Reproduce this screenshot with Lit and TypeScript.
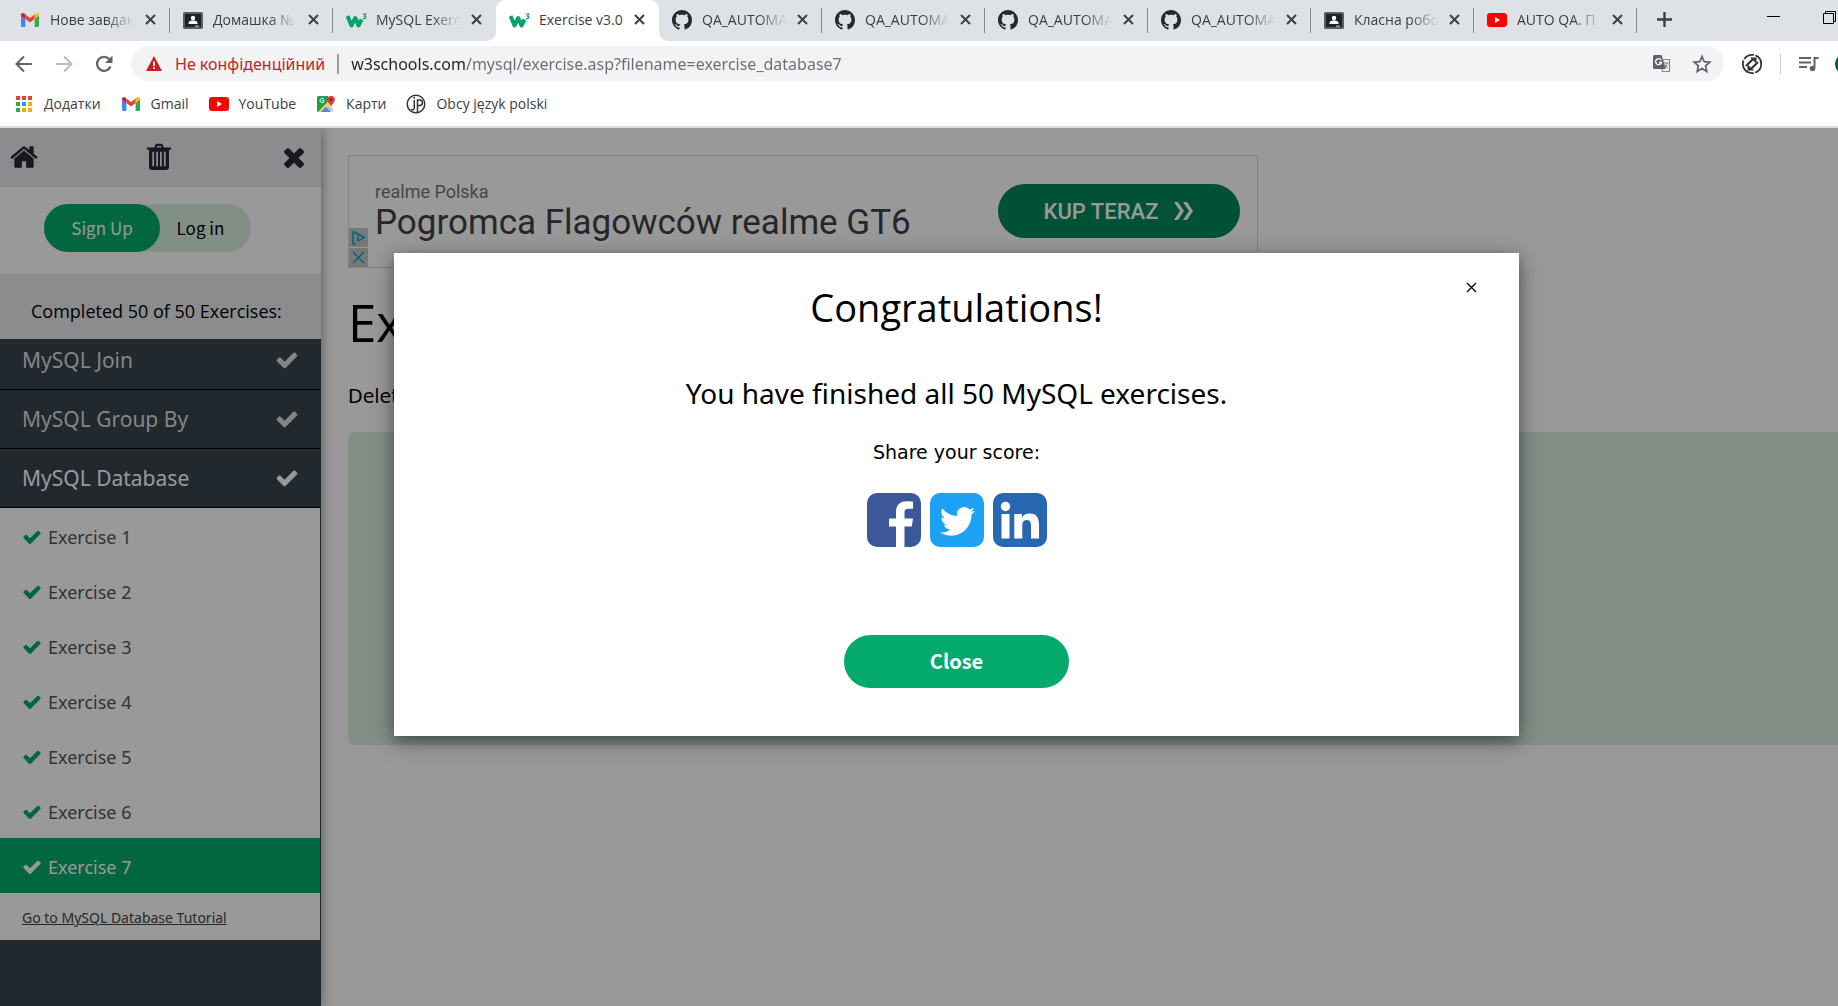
import { LitElement, html, css, svg, TemplateResult } from "lit";
import { customElement } from "lit/decorators.js";
import { classMap } from "lit/directives/class-map.js";

const UI_FONT = css`"Open Sans", "Noto Sans", sans-serif`;
const PAGE_FONT = css`"Noto Sans", "Open Sans", sans-serif`;

const base = css`
  * {
    box-sizing: border-box;
  }
  svg {
    display: block;
    flex: none;
  }
  button,
  input {
    margin: 0;
    padding: 0;
    border: 0;
    background: none;
    font: inherit;
    color: inherit;
  }
  a {
    color: inherit;
    text-decoration: none;
  }
`;

/* ---------- icons ---------- */

const CHECK =
  "M1671 566q0 40-28 68l-724 724-136 136q-28 28-68 28t-68-28l-136-136-362-362q-28-28-28-68t28-68l136-136q28-28 68-28t68 28l294 295 656-657q28-28 68-28t68 28l136 136q28 28 28 68z";
const TIMES =
  "M1490 1322q0 40-28 68l-136 136q-28 28-68 28t-68-28l-294-294-294 294q-28 28-68 28t-68-28l-136-136q-28-28-28-68t28-68l294-294-294-294q-28-28-28-68t28-68l136-136q28-28 68-28t68 28l294 294 294-294q28-28 68-28t68 28l136 136q28 28 28 68t-28 68l-294 294 294 294q28 28 28 68z";
const HOME =
  "M1472 992v480q0 26-19 45t-45 19h-384v-384h-256v384h-384q-26 0-45-19t-19-45v-480q0-1 .5-3t.5-3l575-474 575 474q1 2 1 6zm223-69l-62 74q-8 9-21 11h-3q-13 0-21-7l-692-577-692 577q-12 8-24 7-13-2-21-11l-62-74q-8-10-7-23.5t11-21.5l719-599q32-26 76-26t76 26l244 204v-195q0-14 9-23t23-9h192q14 0 23 9t9 23v408l219 182q10 8 11 21.5t-7 23.5z";

const solid = (d: string, size: number) => html`
  <svg width=${size} height=${size} viewBox="0 0 1792 1792" fill="currentColor" aria-hidden="true">
    <path d=${d} />
  </svg>
`;

const trash = html`
  <svg width="30" height="30" viewBox="0 0 30 30" fill="currentColor" aria-hidden="true">
    <path d="M10 6.500L11.200 3q.5-1.300 2-1.300h3.800q1.500 0 2 1.300l1.200 3.500h-2.500l-.8-2.500h-3.600l-.8 2.500z" />
    <rect x="3" y="5.500" width="24" height="2.300" rx=".6" />
    <path
      fill-rule="evenodd"
      d="M5 7h20v18q0 3-3 3H8q-3 0-3-3zM8.300 9.700v14.600h1.800V9.700zM12.200 9.700v14.600h1.800V9.700zM16 9.700v14.600h1.800V9.700zM19.900 9.700v14.600h1.800V9.700z"
    />
  </svg>
`;

const gmail = html`
  <svg width="20" height="20" viewBox="0 0 20 20" aria-hidden="true">
    <path d="M1 5.500v10.300q0 1.200 1.200 1.200H5.400V8.800z" fill="#4285f4" />
    <path d="M19 5.500v10.300q0 1.200-1.200 1.200H14.600V8.800z" fill="#34a853" />
    <path d="M14.600 4.500v4.500L19 5.800V5c0-1.900-2-2.600-3.300-1.500z" fill="#fbbc04" />
    <path d="M5.400 9V4.500L10 8l4.600-3.500V9L10 12.500z" fill="#ea4335" />
    <path d="M1 5v.8L5.400 9V4.500L4.300 3.500C3 2.400 1 3.100 1 5z" fill="#c5221f" />
  </svg>
`;

const classroom = html`
  <svg width="20" height="20" viewBox="0 0 20 20" aria-hidden="true">
    <rect x="0" y="2" width="20" height="17" rx="1.500" fill="#5c5f62" />
    <rect x="2" y="4" width="16" height="13" fill="#202124" />
    <circle cx="10" cy="8" r="2.200" fill="#fff" />
    <path d="M5.500 14v-1c0-1.800 2.800-2.400 4.500-2.400s4.500.6 4.500 2.400v1z" fill="#fff" />
    <rect x="12" y="15.500" width="4" height="1.500" fill="#9aa0a6" />
  </svg>
`;

const w3 = html`
  <svg width="22" height="20" viewBox="0 0 22 20" aria-hidden="true">
    <path
      d="M1.500 6L5.500 15.500L9.300 8L12.500 15.500L15.500 9.500"
      fill="none"
      stroke="#04a36a"
      stroke-width="4"
      stroke-linejoin="round"
    />
    <path
      d="M16.800 4h3L18.300 6.200q1.800.2 1.500 1.600q-.4 1.300-2.900.7"
      fill="none"
      stroke="#04a36a"
      stroke-width="1.200"
    />
  </svg>
`;

const github = html`
  <svg width="20" height="20" viewBox="0 0 16 16" fill="#24292e" aria-hidden="true">
    <path
      d="M8 0C3.580 0 0 3.580 0 8c0 3.540 2.290 6.530 5.470 7.590.4.070.55-.17.55-.38 0-.19-.01-.82-.01-1.490-2.010.37-2.530-.49-2.690-.94-.09-.23-.48-.94-.82-1.130-.28-.15-.68-.52-.01-.53.63-.01 1.080.58 1.230.82.72 1.210 1.870.87 2.330.66.070-.52.28-.87.51-1.070-1.780-.2-3.640-.89-3.640-3.950 0-.87.31-1.590.82-2.150-.08-.2-.36-1.020.080-2.120 0 0 .67-.21 2.200.82.64-.18 1.320-.27 2-.27.68 0 1.360.09 2 .27 1.530-1.040 2.200-.82 2.200-.82.44 1.100.16 1.920.08 2.120.51.56.82 1.270.82 2.150 0 3.070-1.870 3.750-3.650 3.950.29.25.54.73.54 1.480 0 1.070-.01 1.930-.01 2.200 0 .21.15.46.55.38A8.013 8.013 0 0016 8c0-4.420-3.580-8-8-8z"
    />
  </svg>
`;

const youtube = html`
  <svg width="20" height="20" viewBox="0 0 20 20" aria-hidden="true">
    <rect x="0" y="3" width="20" height="14" rx="3" fill="#f00" />
    <path d="M8 7l5 3-5 3z" fill="#fff" />
  </svg>
`;

const dots = ["#ea4335", "#ea4335", "#ea4335", "#34a853", "#4285f4", "#f9ab00", "#34a853", "#f9ab00", "#f9ab00"];
const apps = html`
  <svg width="20" height="20" viewBox="0 0 20 20" aria-hidden="true">
    ${dots.map((c, i) => svg`<rect x=${2 + (i % 3) * 6} y=${2 + Math.floor(i / 3) * 6} width="4" height="4" fill=${c} />`)}
  </svg>
`;

const maps = html`
  <svg width="20" height="20" viewBox="0 0 20 20" aria-hidden="true">
    <rect x="1" y="2" width="16" height="16" rx="1.500" fill="#e8eaed" />
    <path d="M1 3.500Q1 2 2.500 2H12L12 8 3 18H2.500Q1 18 1 16.500z" fill="#1e9e5a" />
    <path d="M2 18L12 7.500L14 9.500L5.500 18z" fill="#fdd23c" />
    <path d="M5 18L9.700 12.500L15 18z" fill="#4285f4" />
    <path d="M10 13.500l2.500-2.500 4.500 5v1.500z" fill="#bdc1c6" />
    <path d="M7.800 5.300a2.100 2.100 0 1 0 .4 1.500H6.200" fill="none" stroke="#fff" stroke-width="1" />
    <path d="M15 13c-.4-3-3.600-4-3.600-7.200a3.700 3.700 0 0 1 7.400 0c0 3.200-3.400 4.200-3.800 7.200z" fill="#e53935" />
    <circle cx="15" cy="5.500" r="1.300" fill="#8b1a14" />
  </svg>
`;

const polish = html`
  <svg width="20" height="20" viewBox="0 0 20 20" fill="none" stroke="#333" aria-hidden="true">
    <circle cx="10" cy="10" r="8.800" stroke-width="1.500" />
    <path d="M8.300 6v8q0 2.200-3.300 1.800M11.500 18.500V6h2.200q2.800 0 2.800 2.700t-2.800 2.700h-2M8.300 3v1.700" stroke-width="1.500" />
  </svg>
`;

const closeGlyph = html`
  <svg width="11" height="11" viewBox="0 0 11 11" fill="none" stroke="#3c4043" stroke-width="2" aria-hidden="true">
    <path d="M1 1l9 9M10 1l-9 9" />
  </svg>
`;

/* ---------- browser tab strip ---------- */

interface Tab {
  icon: TemplateResult;
  title: string;
  active?: boolean;
}

@customElement("browser-tabs")
export class BrowserTabs extends LitElement {
  static styles = [
    base,
    css`
      :host {
        display: flex;
        justify-content: space-between;
        height: 41px;
        padding-left: 7px;
        background: #dee1e6;
        color: #3c4043;
        font: 14px/20px ${UI_FONT};
        overflow: hidden;
      }
      .tabs {
        display: flex;
      }
      .tab {
        position: relative;
        display: flex;
        align-items: center;
        width: 163px;
        padding: 0 14px 2px 13px;
      }
      .tab::after {
        content: "";
        position: absolute;
        right: 0;
        top: 8px;
        width: 1px;
        height: 25px;
        background: #85888c;
      }
      .tab.bare::after {
        display: none;
      }
      .active {
        background: #fff;
        border-radius: 9px 9px 0 0;
      }
      .tab.active::before,
      .tab.active::after {
        content: "";
        position: absolute;
        top: auto;
        bottom: 0;
        width: 9px;
        height: 9px;
        background: none;
        clip-path: inset(0);
      }
      .tab.active::before {
        left: -9px;
        border-bottom-right-radius: 9px;
        box-shadow: 4px 4px 0 4px #fff;
      }
      .tab.active::after {
        right: -9px;
        border-bottom-left-radius: 9px;
        box-shadow: -4px 4px 0 4px #fff;
      }
      .icon {
        width: 30px;
        flex: none;
      }
      .title {
        flex: 1;
        overflow: hidden;
        white-space: nowrap;
        mask-image: linear-gradient(to right, #000 65%, transparent 98%);
      }
      .active .title {
        mask-image: none;
      }
      .close {
        width: 20px;
        height: 20px;
        margin-left: 4px;
        margin-right: -4px;
        display: grid;
        place-items: center;
      }
      .new {
        width: 55px;
        display: grid;
        place-items: center;
        padding-bottom: 2px;
      }
      .window {
        display: flex;
        align-items: flex-start;
        gap: 43px;
        padding-top: 11px;
      }
    `,
  ];

  private tabs: Tab[] = [
    { icon: gmail, title: "Нове завдан" },
    { icon: classroom, title: "Домашка №" },
    { icon: w3, title: "MySQL Exerc" },
    { icon: w3, title: "Exercise v3.0", active: true },
    { icon: github, title: "QA_AUTOMA" },
    { icon: github, title: "QA_AUTOMA" },
    { icon: github, title: "QA_AUTOMA" },
    { icon: github, title: "QA_AUTOMA" },
    { icon: classroom, title: "Класна робо" },
    { icon: youtube, title: "AUTO QA. П" },
  ];

  render() {
    return html`
      <div class="tabs">
        ${this.tabs.map(
          (t, i) => html`
            <div class=${classMap({ tab: true, active: !!t.active, bare: !!this.tabs[i + 1]?.active })}>
              <span class="icon">${t.icon}</span>
              <span class="title">${t.title}</span>
              <button class="close" aria-label="Close tab">${closeGlyph}</button>
            </div>
          `
        )}
        <button class="new" aria-label="New tab">
          <svg width="15" height="15" viewBox="0 0 15 15" stroke="#3c4043" stroke-width="2.400">
            <path d="M7.500 0v15M0 7.500h15" />
          </svg>
        </button>
      </div>
      <div class="window">
        <button aria-label="Minimize">
          <svg width="13" height="12" viewBox="0 0 13 12"><path d="M0 5.500h13" stroke="#000" /></svg>
        </button>
        <button aria-label="Restore">
          <svg width="15" height="14" viewBox="0 0 15 14" fill="none" stroke="#000">
            <path d="M.5 2.500h10v10H.5zM2.500 2V.5h10v10H11" />
          </svg>
        </button>
      </div>
    `;
  }
}

/* ---------- toolbar and bookmarks ---------- */

@customElement("browser-toolbar")
export class BrowserToolbar extends LitElement {
  static styles = [
    base,
    css`
      :host {
        display: block;
        background: #fff;
        border-bottom: 2px solid #dadce0;
        font: 14px/20px ${UI_FONT};
        color: #3c4043;
        overflow: hidden;
      }
      .bar {
        display: flex;
        align-items: center;
        height: 45px;
        padding: 5px 0 5px 14px;
      }
      .nav {
        display: flex;
        gap: 20px;
        width: 117px;
        flex: none;
      }
      .address {
        flex: 1;
        display: flex;
        align-items: center;
        height: 35px;
        padding: 0 12px 0 15px;
        border-radius: 18px;
        background: #f1f3f4;
        font: 16px/24px ${PAGE_FONT};
      }
      .insecure {
        margin-left: 13px;
        color: #c5221f;
        white-space: nowrap;
      }
      .rule {
        width: 2px;
        height: 20px;
        margin: 0 12px;
        background: #9aa0a6;
        flex: none;
      }
      .url {
        flex: 1;
        min-width: 0;
        height: 26px;
        color: #5f6368;
        background: linear-gradient(to right, #202124 115px, #6a6d71 115px);
        -webkit-background-clip: text;
        background-clip: text;
        -webkit-text-fill-color: transparent;
      }
      .tools {
        display: flex;
        gap: 20px;
      }
      .extras {
        display: flex;
        align-items: center;
        margin-left: 17px;
      }
      .split {
        width: 1px;
        height: 20px;
        margin: 0 18px 0 17px;
        background: #c6c8cb;
      }
      .profile {
        width: 30px;
        height: 24px;
        margin: 0 -27px 0 16px;
        border-radius: 50%;
        background: #00574b;
      }
      .bookmarks {
        display: flex;
        height: 40px;
        padding: 0 14px 5px;
        align-items: center;
        gap: 20px;
      }
      .bookmark {
        display: flex;
        align-items: center;
        gap: 10px;
      }
    `,
  ];

  private bookmarks: [TemplateResult, string][] = [
    [apps, "Додатки"],
    [gmail, "Gmail"],
    [youtube, "YouTube"],
    [maps, "Карти"],
    [polish, "Obcy język polski"],
  ];

  render() {
    return html`
      <div class="bar">
        <div class="nav">
          <button aria-label="Back">
            <svg width="20" height="20" viewBox="0 0 20 20" fill="none" stroke="#5f6368" stroke-width="2">
              <path d="M18 10H3M10 2.500L2.500 10l7.500 7.500" />
            </svg>
          </button>
          <button aria-label="Forward">
            <svg width="20" height="20" viewBox="0 0 20 20" fill="none" stroke="#babcbe" stroke-width="2">
              <path d="M2 10h15M10 2.500l7.500 7.500-7.500 7.500" />
            </svg>
          </button>
          <button aria-label="Reload">
            <svg width="20" height="20" viewBox="0 0 20 20" fill="none" stroke="#5f6368" stroke-width="2.200">
              <path d="M16.500 12.500a7 7 0 1 1-1.200-7.300" />
              <path d="M18.500 1.500v7.500h-7.500z" fill="#5f6368" stroke="none" />
            </svg>
          </button>
        </div>
        <div class="address">
          <svg width="16" height="15" viewBox="0 0 16 15" aria-hidden="true">
            <path d="M8 0l8 15H0z" fill="#c5221f" />
            <path d="M8 5.500v4.500M8 11.300v1.800" stroke="#fff" stroke-width="1.700" />
          </svg>
          <span class="insecure">Не конфіденційний</span>
          <span class="rule"></span>
          <input
            class="url"
            type="text"
            aria-label="Address"
            .value=${"w3schools.com/mysql/exercise.asp?filename=exercise_database7"}
          />
          <div class="tools">
            <button aria-label="Translate">
              <svg width="20" height="20" viewBox="0 0 20 20" fill="none">
                <path d="M8.500 5.500h9v12h-7z" stroke="#85888c" stroke-width="1.200" />
                <path d="M2.500 1h7L14 15H2.500Q1 15 1 13.500v-11Q1 1 2.500 1z" fill="#5f6368" />
                <path d="M9.300 6.300A3 3 0 1 0 9.500 8.500H7" stroke="#fff" stroke-width="1.300" />
                <path d="M11.500 9h5M14 8v1M15.500 9q-1 3-3 4.500M13 11l3 3" stroke="#85888c" />
              </svg>
            </button>
            <button aria-label="Bookmark">
              <svg width="20" height="20" viewBox="0 0 20 20" fill="none" stroke="#5f6368" stroke-width="1.700">
                <path d="M10 2.500l2.200 5.200 5.600.5-4.200 3.700 1.200 5.500L10 14.500l-4.800 2.900 1.200-5.500L2.200 8.200l5.600-.5z" />
              </svg>
            </button>
          </div>
        </div>
        <div class="extras">
          <button aria-label="Extension">
            <svg width="22" height="22" viewBox="0 0 22 22" fill="none" stroke="#333">
              <circle cx="11" cy="11" r="9.200" stroke-width="1.800" stroke-dasharray="11 1.500 20 1.500" />
              <path d="M5 13L12 6M10 16L17 9" stroke-width="2.200" />
              <path d="M9 4.500h6.500v6zM13 17.500H6.500v-6z" fill="#333" stroke="none" />
            </svg>
          </button>
          <span class="split"></span>
          <button aria-label="Media controls">
            <svg width="20" height="20" viewBox="0 0 20 20" fill="none" stroke="#5f6368" stroke-width="2">
              <path d="M0 4h12M0 8.500h12M0 13h8M15.500 14V4h4" />
              <circle cx="13.500" cy="14.500" r="2.800" fill="#5f6368" stroke="none" />
            </svg>
          </button>
          <button class="profile" aria-label="Profile"></button>
        </div>
      </div>
      <nav class="bookmarks">
        ${this.bookmarks.map(([icon, label]) => html`<a class="bookmark" href="#">${icon}<span>${label}</span></a>`)}
      </nav>
    `;
  }
}

/* ---------- exercise sidebar ---------- */

@customElement("exercise-sidebar")
export class ExerciseSidebar extends LitElement {
  static styles = [
    base,
    css`
      :host {
        position: relative;
        display: flex;
        flex-direction: column;
        flex: none;
        width: 321px;
        background: #38444d;
        box-shadow: 0 0 12px rgba(0, 0, 0, 0.45);
        font: 18px/24px ${PAGE_FONT};
        color: #000;
      }
      .top {
        display: flex;
        align-items: center;
        justify-content: space-between;
        height: 59px;
        padding: 0 12px 2px 9px;
        background: #e7e9eb;
        color: #282a35;
      }
      .account {
        height: 87px;
        padding: 17px 0 0 44px;
        background: #fff;
      }
      .pill {
        display: inline-flex;
        height: 48px;
        border-radius: 24px;
        background: #d9eee1;
        font: 17px/24px "Noto Sans CJK SC", "Open Sans", sans-serif;
      }
      .signup {
        width: 116px;
        border-radius: 24px;
        background: #04aa6d;
        color: #fff;
      }
      .login {
        width: 91px;
        padding-right: 10px;
      }
      .progress {
        height: 65px;
        padding: 25px 0 0 31px;
        background: #e7e9eb;
        white-space: nowrap;
        font-family: ${UI_FONT};
      }
      .menu {
        flex: 1;
        min-height: 0;
        overflow: hidden;
        padding-right: 1px;
      }
      .scrolled {
        margin-top: -8px;
      }
      .topic {
        display: flex;
        align-items: center;
        justify-content: space-between;
        width: 100%;
        height: 59px;
        padding: 0 21px 0 22px;
        border-bottom: 1px solid #000;
        color: #ddd;
        font-size: 21px;
      }
      .topic.open {
        color: #fff;
      }
      .exercise {
        display: flex;
        align-items: center;
        gap: 6px;
        height: 55px;
        padding: 2px 22px 0;
        background: #fff;
        color: #555;
      }
      .exercise svg {
        color: #04aa6d;
      }
      .exercise.current,
      .exercise.current svg {
        background: #04aa6d;
        color: #fff;
      }
      .more {
        height: 47px;
        padding: 13px 22px 0;
        background: #fff;
        color: #444;
        font-size: 14px;
      }
      .more a {
        text-decoration: underline;
      }
    `,
  ];

  private topics = ["MySQL Join", "MySQL Group By", "MySQL Database"];

  render() {
    return html`
      <div class="top">
        <button aria-label="Home">${solid(HOME, 30)}</button>
        <button aria-label="Reset score">${trash}</button>
        <button aria-label="Close menu">${solid(TIMES, 30)}</button>
      </div>
      <div class="account">
        <div class="pill">
          <button class="signup">Sign Up</button>
          <button class="login">Log in</button>
        </div>
      </div>
      <div class="progress">Completed 50 of 50 Exercises:</div>
      <div class="menu">
        <div class="scrolled">
          ${this.topics.map(
            (name, i) => html`
              <button class=${classMap({ topic: true, open: i === 2 })}><span>${name}</span>${solid(CHECK, 24)}</button>
            `
          )}
          ${[1, 2, 3, 4, 5, 6, 7].map(
            (n) => html`
              <a class=${classMap({ exercise: true, current: n === 7 })} href="#">
                ${solid(CHECK, 20)}<span>Exercise ${n}</span>
              </a>
            `
          )}
          <div class="more"><a href="#">Go to MySQL Database Tutorial</a></div>
        </div>
      </div>
    `;
  }
}

/* ---------- exercise page ---------- */

@customElement("exercise-page")
export class ExercisePage extends LitElement {
  static styles = [
    base,
    css`
      :host {
        flex: 1;
        min-width: 0;
        padding: 27px 0 0 27px;
        color: #000;
      }
      .ad {
        position: relative;
        display: flex;
        justify-content: space-between;
        align-items: flex-start;
        max-width: 910px;
        height: 113px;
        padding: 22px 17px 0 26px;
        border: 1px solid #d9dadc;
        font-family: Roboto, sans-serif;
      }
      .brand {
        font-size: 18px;
        line-height: 28px;
        color: #757779;
      }
      .offer {
        font-size: 35px;
        line-height: 34px;
        color: #3f4145;
      }
      .buy {
        display: flex;
        align-items: center;
        justify-content: center;
        gap: 16px;
        width: 242px;
        height: 54px;
        margin-top: 6px;
        border-radius: 27px;
        background: #00875a;
        color: #fff;
        font-size: 22px;
        font-weight: 500;
      }
      .choices {
        position: absolute;
        left: 0;
        bottom: 0;
        display: grid;
        gap: 1px;
      }
      .choice {
        display: grid;
        place-items: center;
        width: 19px;
        height: 19px;
        background: #c8c9ca;
      }
      h1 {
        margin: 20px 0 0;
        font: 51px/68px ${UI_FONT};
      }
      .task {
        margin: 26px 0 0;
        font: 19px/28px "DejaVu Sans", sans-serif;
      }
      .answer {
        height: 313px;
        margin-top: 22px;
        border-radius: 6px 0 0 6px;
        background: #d9eee1;
      }
    `,
  ];

  render() {
    return html`
      <div class="ad">
        <div>
          <div class="brand">realme Polska</div>
          <div class="offer">Pogromca Flagowców realme GT6</div>
        </div>
        <button class="buy">
          <span>KUP TERAZ</span>
          <svg width="20" height="18" viewBox="0 0 20 18" fill="#fff" aria-hidden="true">
            <path d="M0 0h4l6 9-6 9H0l6-9zM9 0h4l6 9-6 9H9l6-9z" />
          </svg>
        </button>
        <div class="choices">
          <button class="choice" aria-label="Ad choices">
            <svg width="15" height="15" viewBox="0 0 15 15" fill="none" stroke="#00aecd" stroke-width="1.500">
              <path d="M4.500 13.200L2 14V1.500L13.500 7.500L7 11V5.500" stroke-linejoin="round" />
              <path d="M7 3.500v1" />
            </svg>
          </button>
          <button class="choice" aria-label="Close ad">
            <svg width="13" height="13" viewBox="0 0 13 13" fill="none" stroke="#00aecd" stroke-width="1.500">
              <path d="M1 1l11 11M12 1L1 12" />
            </svg>
          </button>
        </div>
      </div>
      <h1>Exercise:</h1>
      <p class="task">Delete</p>
      <div class="answer"></div>
    `;
  }
}

/* ---------- score dialog ---------- */

@customElement("score-dialog")
export class ScoreDialog extends LitElement {
  static styles = [
    base,
    css`
      :host {
        position: absolute;
        inset: 0;
        display: flex;
        justify-content: center;
        align-items: flex-start;
        padding: 125px 0 0 75px;
        background: rgba(0, 0, 0, 0.4);
      }
      .card {
        position: relative;
        display: flex;
        flex-direction: column;
        align-items: center;
        width: 100%;
        max-width: 1125px;
        padding: 26px 0 48px;
        background: #fff;
        box-shadow: 0 5px 13px rgba(0, 0, 0, 0.3), 0 5px 24px rgba(0, 0, 0, 0.26);
        color: #000;
        font-family: ${PAGE_FONT};
      }
      h2 {
        margin: 0;
        font: 400 38px/56px ${UI_FONT};
      }
      .summary {
        margin: 38px 0 0;
        font-size: 28px;
        line-height: 40px;
      }
      .share {
        margin: 25px 0 0;
        font: 19px/28px "DejaVu Sans", sans-serif;
      }
      .links {
        display: flex;
        gap: 9px;
        margin-top: 27px;
      }
      .done {
        width: 225px;
        height: 53px;
        padding-bottom: 2px;
        margin-top: 88px;
        border-radius: 27px;
        background: #04aa6d;
        color: #fff;
        font: 700 20px/28px "Noto Sans CJK SC", "Open Sans", sans-serif;
      }
      .dismiss {
        position: absolute;
        top: 22px;
        right: 36px;
        width: 24px;
        height: 24px;
        display: grid;
        place-items: center;
      }
    `,
  ];

  render() {
    return html`
      <section class="card" role="dialog" aria-labelledby="title">
        <button class="dismiss" aria-label="Dismiss">
          <svg width="11" height="11" viewBox="0 0 11 11" stroke="#000" stroke-width="1.300">
            <path d="M1 1l9 9M10 1l-9 9" />
          </svg>
        </button>
        <h2 id="title">Congratulations!</h2>
        <p class="summary">You have finished all 50 MySQL exercises.</p>
        <p class="share">Share your score:</p>
        <div class="links">
          <a href="#" aria-label="Share on Facebook">
            <svg width="54" height="54" viewBox="0 0 54 54">
              <rect width="54" height="54" rx="10" fill="#3b5998" />
              <path
                d="M29 54V33.500h-7v-8h7V19c0-7 4-10.700 10.500-10.700 3 0 5.500.2 6.500.4v7h-4.500c-3.300 0-4 1.600-4 4v5.800H46l-1.200 8h-7.300V54z"
                fill="#fff"
              />
            </svg>
          </a>
          <a href="#" aria-label="Share on Twitter">
            <svg width="54" height="54" viewBox="0 0 54 54">
              <rect width="54" height="54" rx="10" fill="#1da1f2" />
              <svg x="10" y="11" width="35" height="35" viewBox="0 0 24 24">
                <path
                  d="M23.953 4.570a10 10 0 01-2.825.775 4.958 4.958 0 002.163-2.723c-.951.555-2.005.959-3.127 1.184a4.920 4.920 0 00-8.384 4.482C7.690 8.095 4.067 6.130 1.640 3.162a4.822 4.822 0 00-.666 2.475c0 1.710.87 3.213 2.188 4.096a4.904 4.904 0 01-2.228-.616v.06a4.923 4.923 0 003.946 4.827 4.996 4.996 0 01-2.212.085 4.936 4.936 0 004.604 3.417 9.867 9.867 0 01-6.102 2.105c-.39 0-.779-.023-1.170-.067a13.995 13.995 0 007.557 2.209c9.053 0 13.998-7.496 13.998-13.985 0-.21 0-.42-.015-.63A9.935 9.935 0 0024 4.590z"
                  fill="#fff"
                />
              </svg>
            </svg>
          </a>
          <a href="#" aria-label="Share on LinkedIn">
            <svg width="54" height="54" viewBox="0 0 54 54">
              <rect width="54" height="54" rx="10" fill="#2867b2" />
              <circle cx="12.500" cy="13.500" r="4.700" fill="#fff" />
              <path
                d="M8.500 21h8v24.500h-8zM21.300 21H29v3.400c1.400-2.400 4-4 7.500-4 7.300 0 9.500 4.600 9.500 11.300v13.800h-8V33c0-3.200-.6-6-4.200-6s-4.500 2.800-4.500 6v12.500h-8z"
                fill="#fff"
              />
            </svg>
          </a>
        </div>
        <button class="done">Close</button>
      </section>
    `;
  }
}

/* ---------- root ---------- */

@customElement("app-root")
export class AppRoot extends LitElement {
  static styles = css`
    :host {
      display: flex;
      flex-direction: column;
      height: 100vh;
      overflow: hidden;
      background: #fff;
    }
    .viewport {
      position: relative;
      display: flex;
      flex: 1;
      min-height: 0;
      overflow: hidden;
    }
  `;

  render() {
    return html`
      <browser-tabs></browser-tabs>
      <browser-toolbar></browser-toolbar>
      <div class="viewport">
        <exercise-sidebar></exercise-sidebar>
        <exercise-page></exercise-page>
        <score-dialog></score-dialog>
      </div>
    `;
  }
}
